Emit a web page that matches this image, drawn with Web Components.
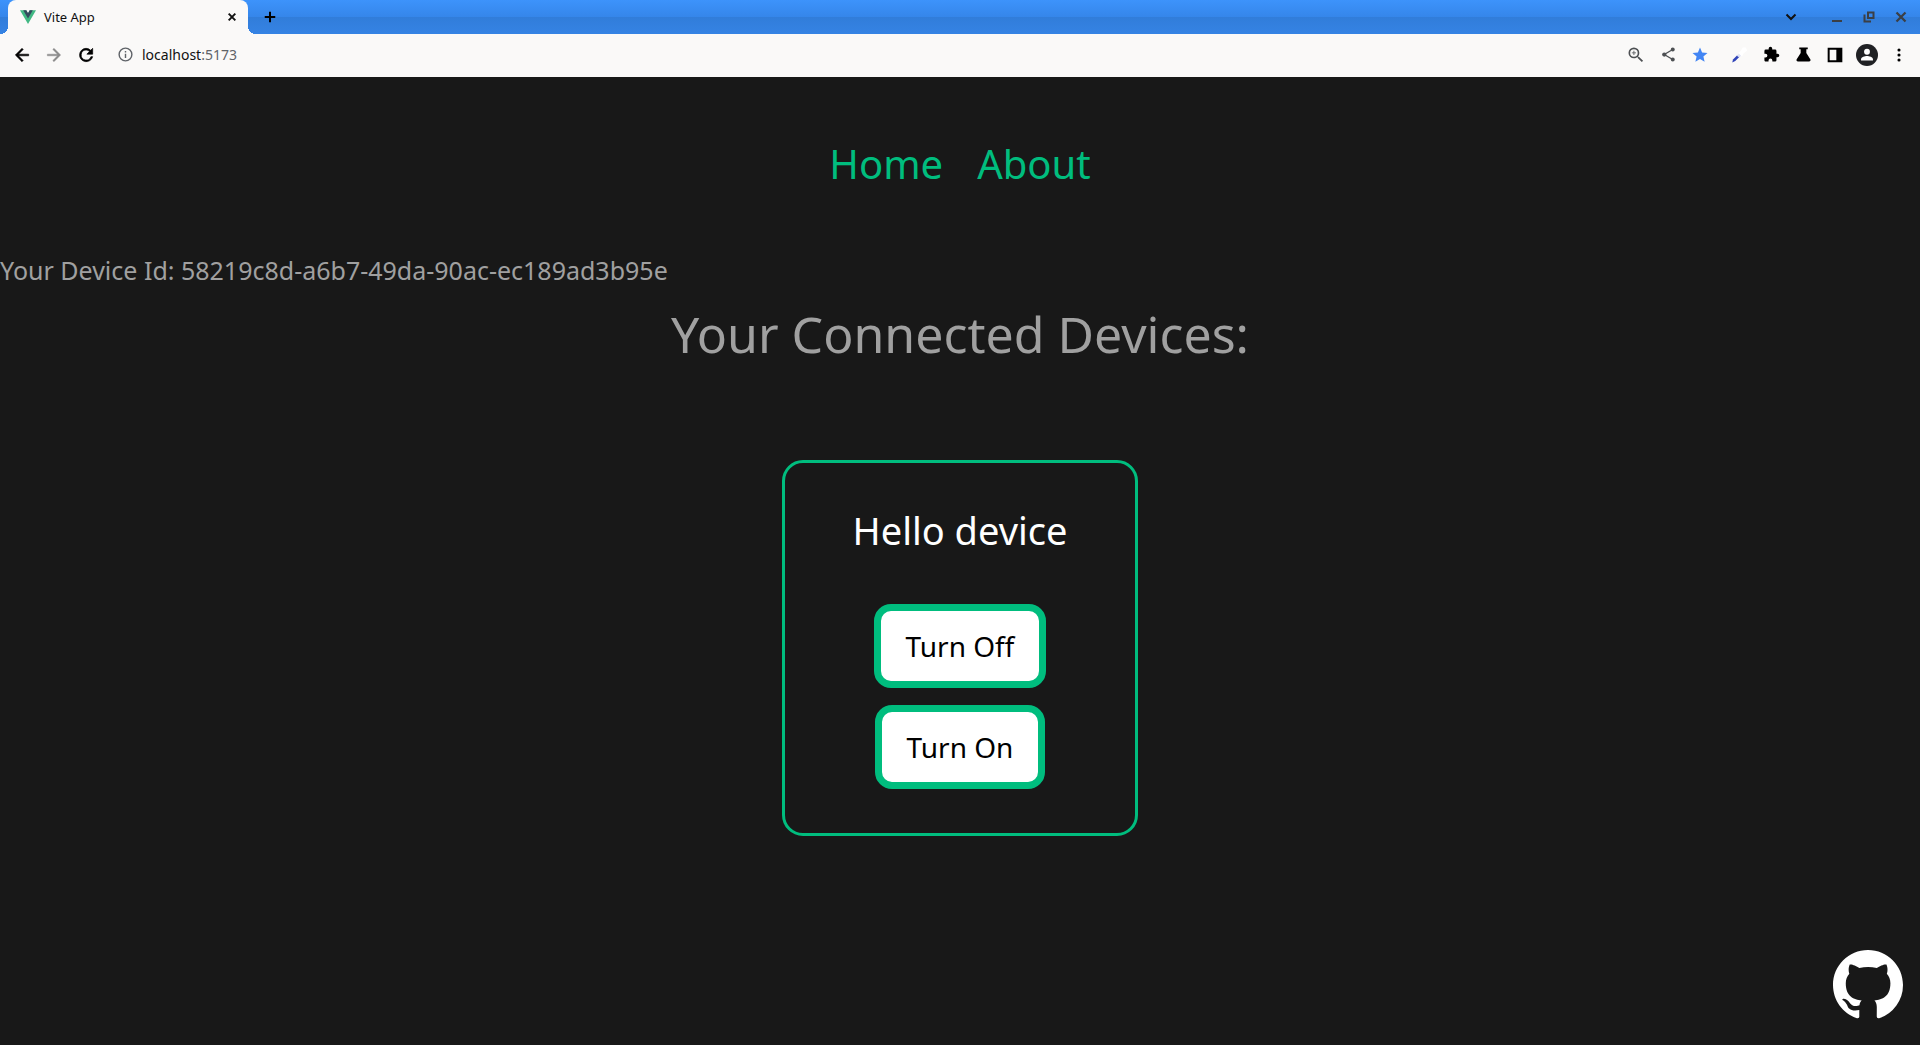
<!DOCTYPE html>
<html lang="en">
<head>
<meta charset="utf-8">
<title>Vite App</title>
<style>
html, body { margin: 0; height: 100%; background: #181818; }
body { font-family: "Noto Sans", sans-serif; }
</style>
</head>
<body>
<app-window></app-window>
<script>
class BaseElement extends HTMLElement {
  connectedCallback() {
    if (this.shadowRoot) return;
    this.attachShadow({ mode: "open" }).innerHTML =
      `<style>*{box-sizing:border-box}svg{display:block}button{font:inherit;border:0;padding:0;background:none;cursor:pointer}</style>` + this.render();
  }
}

const ICONS = {
  plus: `<path d="M12 3v18M3 12h18" stroke="#000" stroke-width="3.4"/>`,
  close: `<path d="M4 4l16 16M20 4L4 20" stroke="#111" stroke-width="4.6"/>`,
  back: `<path fill="#000" stroke="#000" stroke-width=".7" d="M20 11H7.83l5.59-5.59L12 4l-8 8 8 8 1.41-1.41L7.83 13H20v-2z"/>`,
  forward: `<path fill="#8b8b8b" stroke="#8b8b8b" stroke-width=".5" d="M12 4l-1.41 1.41L16.17 11H4v2h12.17l-5.58 5.59L12 20l8-8z"/>`,
  reload: `<path fill="#000" stroke="#000" stroke-width=".8" d="M17.65 6.35A7.96 7.96 0 0012 4a8 8 0 108 10h-2.1A6 6 0 1112 6c1.66 0 3.14.69 4.22 1.78L13 11h7V4l-2.35 2.35z"/>`,
  info: `<path fill="#5f6368" d="M11 17h2v-6h-2v6zm1-15a10 10 0 100 20 10 10 0 000-20zm0 18a8 8 0 110-16 8 8 0 010 16zM11 9h2V7h-2v2z"/>`,
  zoom: `<path fill="#4d5053" d="M15.5 14h-.79l-.28-.27A6.47 6.47 0 0016 9.5 6.5 6.5 0 109.5 16c1.61 0 3.09-.59 4.23-1.57l.27.28v.79l5 4.99L20.49 19l-4.99-5zm-6 0a4.5 4.5 0 110-9 4.5 4.5 0 010 9zM10 7H9v2H7v1h2v2h1v-2h2V9h-2z"/>`,
  share: `<path d="M18 5L6 12l12 7" fill="none" stroke="#4d5053" stroke-width="1.8"/><g fill="#4d5053"><circle cx="18" cy="5" r="2.8"/><circle cx="6" cy="12" r="3"/><circle cx="18" cy="19" r="2.8"/></g>`,
  star: `<path fill="#4285f4" d="M12 17.27L18.18 21l-1.64-7.03L22 9.24l-7.19-.61L12 2 9.19 8.63 2 9.24l5.46 4.73L5.82 21z"/>`,
  picker: `<path d="M3 22l1-4 6-6 3 2-6 6z" fill="#2f43b8"/><path d="M9 13l3-3 3 3-3 2z" fill="#dfe4f6"/><path d="M11 9l3-2 3-5h4l2 4-5 4-2 4z" fill="#fff"/>`,
  puzzle: `<path fill="#000" d="M20.5 11H19V7a2 2 0 00-2-2h-4V3.5a2.5 2.5 0 00-5 0V5H4a2 2 0 00-2 2v3.8h1.500a2.700 2.700 0 010 5.400H2V20c0 1.100.9 2 2 2h3.800v-1.500a2.700 2.700 0 015.400 0V22H17a2 2 0 002-2v-4h1.500a2.500 2.500 0 000-5z"/>`,
  flask: `<path fill="#000" d="M6 2h12v2.500h-2V10l5.600 8.600A2.200 2.200 0 0119.800 22H4.200a2.200 2.200 0 01-1.800-3.400L8 10V4.500H6z"/>`,
  panel: `<path fill="#000" fill-rule="evenodd" d="M1 1h22v22H1zM4 4v16h10V4z"/>`,
  profile: `<circle cx="12" cy="12" r="12" fill="#202124"/><circle cx="12" cy="8.500" r="3.200" fill="#fff"/><path fill="#fff" d="M5.500 18v-1.500c0-2.300 4.300-3.500 6.500-3.500s6.500 1.200 6.500 3.500V18z"/>`,
  more: `<g fill="#000"><circle cx="12" cy="3.500" r="2.700"/><circle cx="12" cy="12" r="2.700"/><circle cx="12" cy="20.500" r="2.700"/></g>`,
  chevron: `<path d="M3 7l9 9 9-9" fill="none" stroke="#111" stroke-width="4"/>`,
  minimize: `<path fill="#3b3f45" d="M2 18h20v4H2z"/>`,
  restore: `<g fill="none" stroke="#3b3f45" stroke-width="4"><path d="M10 3h11v11H10z"/><path d="M3 7v14h13"/></g>`,
  quit: `<path d="M3 3l18 18M21 3L3 21" stroke="#3b3f45" stroke-width="4.500"/>`,
  vue: `<path fill="#41b883" d="M0 2h9.500L12 6.300 14.500 2H24L12 22.500z"/><path fill="#35495e" d="M4.800 2h4.700L12 6.300 14.500 2h4.700L12 14.300z"/>`,
  github: `<path transform="scale(1.5)" fill="#fff" d="M8 0C3.580 0 0 3.580 0 8c0 3.540 2.290 6.530 5.470 7.590.4.070.55-.17.55-.38 0-.19-.01-.82-.01-1.490-2.010.37-2.530-.49-2.690-.94-.09-.23-.48-.94-.82-1.130-.28-.15-.68-.52-.01-.53.63-.01 1.080.58 1.230.82.72 1.210 1.870.87 2.330.66.07-.52.28-.87.51-1.070-1.780-.2-3.640-.89-3.640-3.950 0-.87.31-1.590.82-2.150-.08-.2-.36-1.020.08-2.120 0 0 .67-.21 2.200.82.64-.18 1.320-.27 2-.27s1.360.09 2 .27c1.530-1.040 2.200-.82 2.200-.82.44 1.100.16 1.920.08 2.120.51.56.82 1.270.82 2.150 0 3.070-1.870 3.750-3.650 3.950.29.25.54.73.54 1.480 0 1.070-.01 1.930-.01 2.200 0 .21.15.46.55.38A8.010 8.010 0 0016 8c0-4.420-3.580-8-8-8z"/>`
};

customElements.define("ui-icon", class extends BaseElement {
  render() {
    const s = this.getAttribute("size") || 18;
    return `<style>:host{display:block;flex:none}</style><svg width="${s}" height="${s}" viewBox="0 0 24 24" aria-hidden="true">${ICONS[this.getAttribute("name")]}</svg>`;
  }
});

customElements.define("icon-button", class extends BaseElement {
  render() {
    return `<style>:host{display:block;flex:none}button{display:grid;place-items:center;width:var(--w,32px);height:28px}</style>
      <button aria-label="${this.getAttribute("label")}"><ui-icon name="${this.getAttribute("icon")}" size="${this.getAttribute("size") || 18}"></ui-icon></button>`;
  }
});

customElements.define("tab-strip", class extends BaseElement {
  render() {
    return `<style>
      :host{display:flex;align-items:center;height:34px;padding:0 3px 0 8px;background:linear-gradient(#3d93fb,#3586ea 50%,#317dda 51%,#3583e4)}
      .tab{position:relative;display:flex;align-items:center;gap:8px;width:240px;height:34px;padding:0 9px 0 12px;background:#faf9f8;border-radius:8px 8px 0 0;font-size:13px;color:#111}
      .tab::before,.tab::after{content:"";position:absolute;bottom:0;width:8px;height:8px}
      .tab::before{right:100%;background:radial-gradient(circle at 0 0,transparent 8px,#faf9f8 8px)}
      .tab::after{left:100%;background:radial-gradient(circle at 100% 0,transparent 8px,#faf9f8 8px)}
      .title{flex:1}
      .new{margin-left:6px}
      .win{display:flex;margin-left:auto}
      .list{margin-right:14px}
    </style>
    <div class="tab"><ui-icon name="vue" size="16"></ui-icon><span class="title">Vite App</span><icon-button style="--w:14px" icon="close" size="10" label="Close tab"></icon-button></div>
    <icon-button class="new" icon="plus" size="14" label="New tab"></icon-button>
    <div class="win">
      <icon-button class="list" icon="chevron" size="12" label="Search tabs"></icon-button>
      <icon-button icon="minimize" size="12" label="Minimize"></icon-button>
      <icon-button icon="restore" size="12" label="Restore"></icon-button>
      <icon-button icon="quit" size="12" label="Close window"></icon-button>
    </div>`;
  }
});

customElements.define("tool-bar", class extends BaseElement {
  render() {
    const button = ([icon, size, label]) => `<icon-button icon="${icon}" size="${size}" label="${label}"></icon-button>`;
    const page = [["zoom",20,"Zoom"],["share",17,"Share"],["star",18,"Bookmark"]];
    const extensions = [["picker",18,"Color picker"],["puzzle",17,"Extensions"],["flask",17,"Labs"],["panel",16,"Side panel"],["profile",22,"Profile"],["more",14,"Menu"]];
    return `<style>
      :host{display:flex;align-items:center;height:43px;padding:0 5px 2px 6px;background:#faf9f8}
      form{display:flex;flex:1;align-items:center;gap:8px;margin:0 0 0 15px}
      .address{display:flex;font-size:14px;color:#5f6368}
      .address b{font-weight:400;color:#111}
      .tools{display:flex}
      .page{margin-right:7px}
    </style>
    <icon-button icon="back" size="20" label="Back"></icon-button>
    <icon-button icon="forward" size="20" label="Forward"></icon-button>
    <icon-button icon="reload" size="20" label="Reload"></icon-button>
    <form><ui-icon name="info" size="17"></ui-icon><span class="address"><b>localhost</b>:5173</span></form>
    <div class="tools page">${page.map(button).join("")}</div>
    <div class="tools">${extensions.map(button).join("")}</div>`;
  }
});

customElements.define("site-nav", class extends BaseElement {
  render() {
    return `<style>
      :host{display:block}
      nav{display:flex;justify-content:center;gap:34px;font-size:40px;line-height:64px}
      a{color:#00bd7e;text-decoration:none}
    </style><nav><a href="#home">Home</a><a href="#about">About</a></nav>`;
  }
});

customElements.define("device-button", class extends BaseElement {
  render() {
    return `<style>
      :host{display:block}
      button{height:84px;padding:0 25px;border:7px solid #00bd7e;border-radius:17px;background:#fff;color:#000;font-size:28px;line-height:38px}
    </style><button><slot></slot></button>`;
  }
});

customElements.define("device-card", class extends BaseElement {
  render() {
    return `<style>
      :host{display:flex;flex-direction:column;align-items:center;gap:17px;padding:35px 68px 44px;border:3px solid #00bd7e;border-radius:21px}
      h2{margin:0 0 25px;font-size:38px;line-height:64px;font-weight:400;color:#fff}
    </style><h2><slot name="name"></slot></h2><slot></slot>`;
  }
});

customElements.define("app-page", class extends BaseElement {
  render() {
    return `<style>
      :host{display:flex;flex-direction:column;flex:1;position:relative;padding-top:55px;color:#a0a0a0;background:#181818}
      .id{margin:53px 0 0;font-size:25px;line-height:42px}
      h1{margin:0;font-size:50px;line-height:86px;font-weight:400;text-align:center}
      .cards{display:flex;justify-content:center;margin-top:83px}
      .gh{position:absolute;right:17px;bottom:25px}
    </style>
    <site-nav></site-nav>
    <p class="id">Your Device Id: 58219c8d-a6b7-49da-90ac-ec189ad3b95e</p>
    <h1>Your Connected Devices:</h1>
    <div class="cards"><device-card><span slot="name">Hello device</span><device-button>Turn Off</device-button><device-button>Turn On</device-button></device-card></div>
    <a class="gh" href="#github" aria-label="GitHub"><ui-icon name="github" size="70"></ui-icon></a>`;
  }
});

customElements.define("app-window", class extends BaseElement {
  render() {
    return `<style>:host{display:flex;flex-direction:column;min-height:100vh}</style><tab-strip></tab-strip><tool-bar></tool-bar><app-page></app-page>`;
  }
});
</script>
</body>
</html>
